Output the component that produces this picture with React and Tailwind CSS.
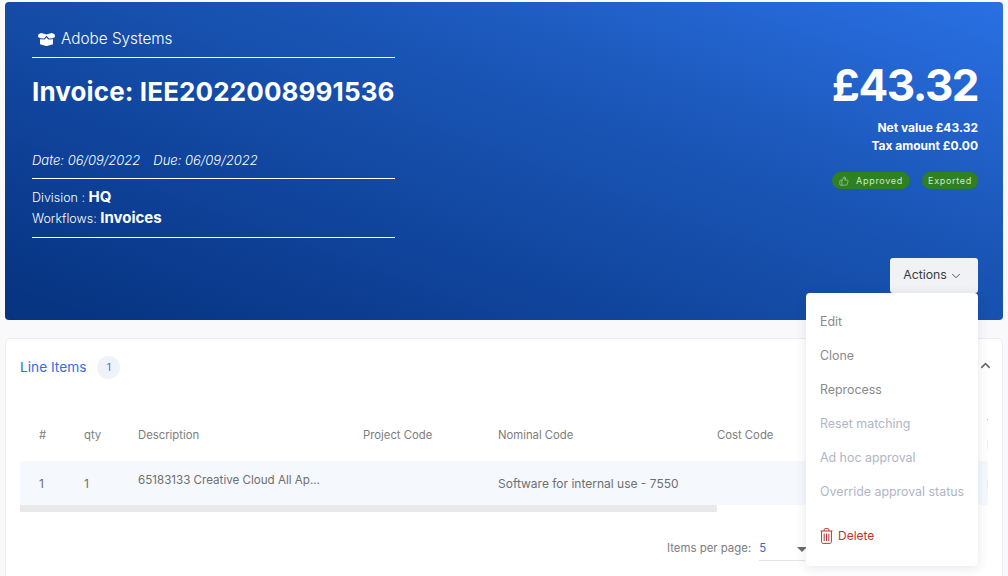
import React from "react";
import { ChevronDown, ChevronUp, ThumbsUp } from "lucide-react";

const columns = [
  { label: "#", cell: "1", width: "w-[64px] pl-[19px]" },
  { label: "qty", cell: "1", width: "w-[54px]" },
  { label: "Description", cell: "65183133 Creative Cloud All Ap...", width: "w-[225px]", raised: true },
  { label: "Project Code", cell: "", width: "w-[135px]" },
  { label: "Nominal Code", cell: "Software for internal use - 7550", width: "w-[219px]" },
  { label: "Cost Code", cell: "", width: "w-[270px]" },
  { label: "Total Price", cell: "Net", width: "w-[40px] leading-[21px]" },
];

const menuItems = [
  { label: "Edit", className: "text-[#8a8a8a]" },
  { label: "Clone", className: "text-[#8a8a8a]" },
  { label: "Reprocess", className: "text-[#8a8a8a]" },
  { label: "Reset matching", className: "text-[#b0b5c6]" },
  { label: "Ad hoc approval", className: "text-[#b0b5c6]" },
  { label: "Override approval status", className: "text-[#b0b5c6]" },
];

function BoxIcon() {
  return (
    <svg className="mb-[5px] shrink-0" width="17" height="13" viewBox="0 0 17 13" fill="white">
      <path d="M3.2 0 8.5 1.6 13.8 0 16.6 1.2 17 4 14.6 5.2 11 5.4 8.5 2.8 6 5.4 2.4 5.2 0 4 .4 1.2Z" />
      <path d="M2 6.2 6.6 6.5 8.5 4.6 10.4 6.5 15 6.2 15 11.2 8.9 13 8.1 13 2 11.2Z" />
    </svg>
  );
}

function BinIcon() {
  return (
    <svg className="shrink-0" width="13" height="16" viewBox="0 0 13 16" fill="none" stroke="currentColor" strokeWidth="1">
      <path d="M.5 3h12" />
      <path d="M4.2 3V1.6C4.2 1 4.6.6 5.2.6h2.6c.6 0 1 .4 1 1V3" />
      <path d="M1.6 3v10.8c0 .9.6 1.6 1.5 1.6h6.8c.9 0 1.5-.7 1.5-1.6V3" />
      <path d="M4.2 5.6v7.4M6.5 5.6v7.4M8.8 5.6v7.4" />
    </svg>
  );
}

function StatusBadge({ children, className }) {
  return (
    <span className={`flex h-[17px] items-center rounded-full bg-[#2e8020] text-[9px] tracking-[0.7px] text-[#d5e6d0] ${className}`}>
      {children}
    </span>
  );
}

export default function App() {
  return (
    <div className="relative h-[576px] w-[1008px] overflow-hidden bg-[#f9f9fc] font-['Inter',sans-serif]">
      <header className="mx-[5px] mt-[2px] flex h-[318px] justify-between rounded-[4px] bg-[linear-gradient(200deg,#2a70e4_0%,#1b57b8_35%,#0a3a8c_85%,#07337f_100%)] pr-[25px] pl-[27px] text-white">
        <div className="w-[363px]">
          <div className="flex h-[56px] items-end border-b border-white pb-[6px] pl-[6px] text-[15.3px] font-light">
            <BoxIcon />
            <span className="ml-[6px]">Adobe Systems</span>
          </div>
          <h1 className="mt-[17px] h-[34px] text-[26px] leading-[34px] font-bold tracking-[0.12px] whitespace-nowrap">
            Invoice: IEE2022008991536
          </h1>
          <div className="mt-[42px] flex h-[28px] gap-[13px] border-b border-white text-[13px] font-light italic">
            <span>Date: 06/09/2022</span>
            <span>Due: 06/09/2022</span>
          </div>
          <div className="flex h-[59px] flex-col border-b border-white pt-[8px] text-[12.5px] leading-[20px] font-light">
            <div>
              Division : <b className="text-[15px] font-bold">HQ</b>
            </div>
            <div>
              Workflows: <b className="text-[15px] font-bold">Invoices</b>
            </div>
          </div>
        </div>

        <div className="flex flex-col items-end">
          <div className="mt-[58px] text-[44px] leading-[50px] font-bold tracking-[-1.5px]">£43.32</div>
          <div className="mt-[9px] text-right text-[12px] leading-[18px] font-bold">
            <div>Net value £43.32</div>
            <div>Tax amount £0.00</div>
          </div>
          <div className="mt-[17px] flex gap-[12px]">
            <StatusBadge className="gap-[7px] px-[7px]">
              <ThumbsUp size={10} strokeWidth={1.25} />
              Approved
            </StatusBadge>
            <StatusBadge className="px-[6px]">Exported</StatusBadge>
          </div>
          <button className="mt-[69px] flex h-[35px] w-[88px] items-center justify-center gap-[2px] rounded-[3px] bg-[#f1f2f6] pr-[2px] text-[12.3px] text-[#3a3a3a]">
            Actions
            <ChevronDown size={14} strokeWidth={1.5} />
          </button>
        </div>
      </header>

      <section className="mx-[5px] mt-[18px] h-[300px] rounded-t-[4px] border border-[#ececf1] bg-white pl-[14px]">
        <div className="flex h-[56px] items-center">
          <span className="text-[13.7px] text-[#2f6fdc]">Line Items</span>
          <span className="ml-[11px] flex h-[23px] w-[23px] items-center justify-center rounded-full bg-[#eff2f8] text-[10px] text-[#2f6fdc]">
            1
          </span>
        </div>

        <div className="mt-[14px] w-[968px] overflow-hidden">
          <div className="flex h-[52px] items-center text-[11.3px] text-[#7d7d7d]">
            {columns.map((col) => (
              <div key={col.label} className={`shrink-0 ${col.width}`}>
                {col.label}
              </div>
            ))}
          </div>
          <div className="flex h-[44px] items-center bg-[#f5f9fd] pt-[2px] text-[#6f6f6f]">
            {columns.map((col) => (
              <div
                key={col.label}
                className={`shrink-0 whitespace-nowrap ${col.width} ${col.raised ? "mb-[6px] text-[11.6px]" : "text-[12px]"}`}
              >
                {col.cell}
              </div>
            ))}
          </div>
          <div className="h-[7px] w-[697px] bg-[#e9e9e9]" />
        </div>

        <div className="mt-[24px] flex items-center pl-[647px] text-[11.4px] text-[#7d7d7d]">
          <span>Items per page:</span>
          <span className="ml-[8px] h-[25px] w-[46px] border-b border-[#e4e4e4] pt-[3px] leading-[18px] text-[#2f6fdc]">5</span>
        </div>
      </section>

      <ChevronUp className="absolute top-[358px] left-[978px] text-[#6a6a6a]" size={15} strokeWidth={2.5} />

      <div className="absolute top-[547px] left-[797px] h-0 w-0 border-x-[5px] border-t-[5px] border-x-transparent border-t-[#6a6a6a]" />

      <div className="absolute top-[293px] left-[806px] z-10 h-[273px] w-[172px] rounded-[4px] bg-white pt-[12px] pl-[14px] text-[12.4px] shadow-[0_2px_12px_rgba(40,50,90,0.12)]">
        {menuItems.map((item) => (
          <div key={item.label} className={`flex h-[34px] items-center whitespace-nowrap ${item.className}`}>
            {item.label}
          </div>
        ))}
        <div className="mt-[18px] flex items-center gap-[5px] text-[12px] text-[#b9352f]">
          <BinIcon />
          Delete
        </div>
      </div>
    </div>
  );
}
